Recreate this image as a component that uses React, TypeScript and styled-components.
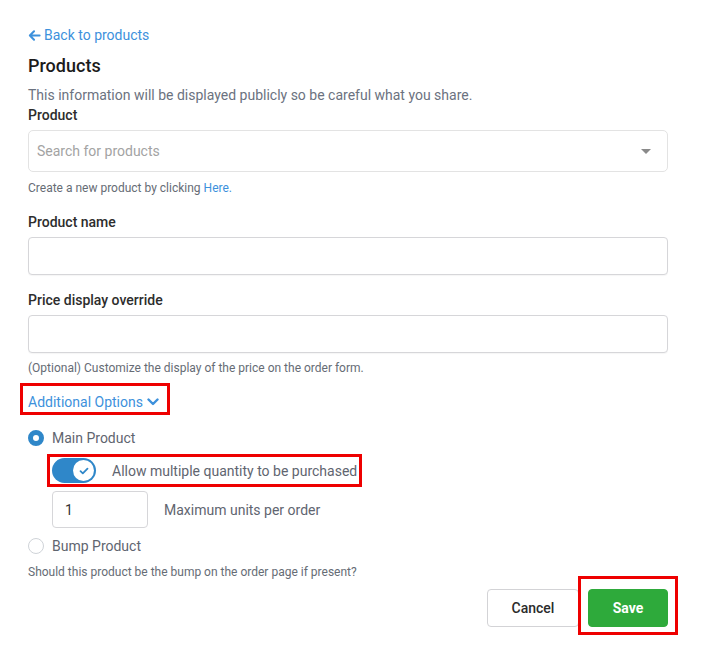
import { createGlobalStyle } from 'styled-components';
import styled from 'styled-components';

const GlobalStyle = createGlobalStyle`
  body {
    margin: 0;
    background: #ffffff;
    font-family: Roboto, "Liberation Sans", sans-serif;
  }
`;

const Page = styled.div`
  width: 640px;
  padding: 25px 28px 20px;
  display: flex;
  flex-direction: column;
`;

const BackLink = styled.a`
  display: flex;
  align-items: center;
  gap: 3px;
  height: 20px;
  font-size: 14px;
  color: #3d91dc;
  text-decoration: none;
`;

const Title = styled.h2`
  margin: 9px 0 0;
  font-size: 18px;
  line-height: 24px;
  font-weight: 500;
  color: #1b1b1b;
`;

const Description = styled.p`
  margin: 7px 0 0;
  font-size: 14px;
  line-height: 20px;
  color: #6b7280;
`;

const Label = styled.label<{ $top?: number }>`
  display: block;
  margin-top: ${({ $top = 0 }) => $top}px;
  font-size: 14px;
  line-height: 20px;
  font-weight: 500;
  color: #2d2d2d;
`;

const Select = styled.div`
  margin-top: 5px;
  height: 42px;
  box-sizing: border-box;
  border: 1px solid #e3e3e3;
  border-radius: 5px;
  display: flex;
  align-items: center;
  justify-content: space-between;
  padding: 0 16px 0 8px;
  font-size: 14px;
  color: #a3a3a3;
`;

const Caret = styled.span`
  width: 0;
  height: 0;
  border-left: 5px solid transparent;
  border-right: 5px solid transparent;
  border-top: 5px solid #8a8a8a;
`;

const Hint = styled.p<{ $top?: number }>`
  margin: ${({ $top = 8 }) => $top}px 0 0;
  font-size: 12px;
  line-height: 16px;
  color: #666c75;
`;

const HintLink = styled.a`
  color: #3d91dc;
  text-decoration: none;
`;

const TextInput = styled.input`
  margin-top: 5px;
  height: 38px;
  box-sizing: border-box;
  width: 100%;
  border: 1px solid #d6d6d9;
  border-radius: 4px;
  box-shadow: 0 1px 1px rgba(0, 0, 0, 0.04);
  font: inherit;
  font-size: 14px;
  padding: 0 12px;
  color: #333;
  outline: none;
`;

const Highlight = styled.div<{ $pad: string; $margin: string }>`
  display: inline-flex;
  align-items: center;
  align-self: flex-start;
  border: 3px solid #ee0000;
  padding: ${({ $pad }) => $pad};
  margin: ${({ $margin }) => $margin};
`;

const Toggler = styled.a`
  display: flex;
  align-items: center;
  gap: 4px;
  font-size: 14px;
  line-height: 20px;
  color: #3d91dc;
`;

const RadioRow = styled.div<{ $top: number }>`
  display: flex;
  align-items: center;
  gap: 8px;
  margin-top: ${({ $top }) => $top}px;
  font-size: 14px;
  line-height: 20px;
  color: #5f6570;
`;

const Radio = styled.span<{ $checked?: boolean }>`
  width: 16px;
  height: 16px;
  box-sizing: border-box;
  border-radius: 50%;
  background: #fff;
  border: ${({ $checked }) => ($checked ? '5px solid #2f87c9' : '1px solid #cfd3d8')};
`;

const SwitchRow = styled.div`
  display: flex;
  align-items: center;
  gap: 16px;
  font-size: 14px;
  line-height: 20px;
  color: #5f6570;
`;

const Switch = styled.span`
  width: 44px;
  height: 25px;
  border-radius: 13px;
  background: #2f87c9;
  display: flex;
  align-items: center;
  justify-content: flex-end;
  padding: 0 2px;
  box-sizing: border-box;
`;

const Knob = styled.span`
  width: 21px;
  height: 21px;
  border-radius: 50%;
  background: #fff;
  display: flex;
  align-items: center;
  justify-content: center;
`;

const QuantityRow = styled.div`
  display: flex;
  align-items: center;
  gap: 16px;
  margin: 4px 0 0 24px;
  font-size: 14px;
  color: #5f6570;
`;

const NumberInput = styled.input`
  width: 96px;
  height: 37px;
  box-sizing: border-box;
  border: 1px solid #d6d6d9;
  border-radius: 4px;
  font: inherit;
  font-size: 14px;
  padding: 0 12px;
  color: #333;
  outline: none;
`;

const Actions = styled.div`
  display: flex;
  justify-content: flex-end;
  align-items: flex-start;
  margin-top: -4px;
`;

const Button = styled.button<{ $primary?: boolean }>`
  height: 38px;
  box-sizing: border-box;
  border-radius: 4px;
  font-family: inherit;
  font-size: 14px;
  font-weight: ${({ $primary }) => ($primary ? 700 : 500)};
  border: 1px solid ${({ $primary }) => ($primary ? '#2eaa3b' : '#d3d3d6')};
  background: ${({ $primary }) => ($primary ? '#2eaa3b' : '#ffffff')};
  color: ${({ $primary }) => ($primary ? '#ffffff' : '#2b2b2b')};
  width: ${({ $primary }) => ($primary ? 80 : 92)}px;
`;

const CancelButton = styled(Button)`
  margin-top: 13px;
`;

export default function App() {
  return (
    <>
      <GlobalStyle />
      <Page>
        <BackLink href="#">
          <svg width="13" height="13" viewBox="0 0 14 14" fill="none" stroke="#3d91dc" strokeWidth="2.2" strokeLinecap="round" strokeLinejoin="round">
            <path d="M12.5 7H2M6.5 2.5L2 7l4.5 4.5" />
          </svg>
          Back to products
        </BackLink>
        <Title>Products</Title>
        <Description>This information will be displayed publicly so be careful what you share.</Description>
        <Label>Product</Label>
        <Select>
          Search for products
          <Caret />
        </Select>
        <Hint>
          Create a new product by clicking <HintLink href="#">Here.</HintLink>
        </Hint>

        <Label $top={16}>Product name</Label>
        <TextInput />

        <Label $top={15}>Price display override</Label>
        <TextInput />
        <Hint $top={7}>(Optional) Customize the display of the price on the order form.</Hint>

        <Highlight $pad="6px 8px 0 5px" $margin="7px 0 0 -8px">
          <Toggler>
            Additional Options
            <svg width="12" height="8" viewBox="0 0 12 8" fill="none" stroke="#3d91dc" strokeWidth="2.4" strokeLinecap="round" strokeLinejoin="round">
              <path d="M1.5 1.5L6 6l4.5-4.5" />
            </svg>
          </Toggler>
        </Highlight>

        <RadioRow $top={13}>
          <Radio $checked />
          Main Product
        </RadioRow>

        <Highlight $pad="1px 2px" $margin="6px 0 0 19px">
          <SwitchRow>
            <Switch>
              <Knob>
                <svg width="10" height="8" viewBox="0 0 10 8" fill="none" stroke="#2f87c9" strokeWidth="1.8" strokeLinecap="round" strokeLinejoin="round">
                  <path d="M1.5 4.2L3.8 6.3L8.5 1.7" />
                </svg>
              </Knob>
            </Switch>
            Allow multiple quantity to be purchased
          </SwitchRow>
        </Highlight>

        <QuantityRow>
          <NumberInput defaultValue="1" />
          Maximum units per order
        </QuantityRow>

        <RadioRow $top={8}>
          <Radio />
          Bump Product
        </RadioRow>
        <Hint>Should this product be the bump on the order page if present?</Hint>

        <Actions>
          <CancelButton>Cancel</CancelButton>
          <Highlight $pad="10px 7px 5px" $margin="0 -10px 0 -1px">
            <Button $primary>Save</Button>
          </Highlight>
        </Actions>
      </Page>
    </>
  );
}
